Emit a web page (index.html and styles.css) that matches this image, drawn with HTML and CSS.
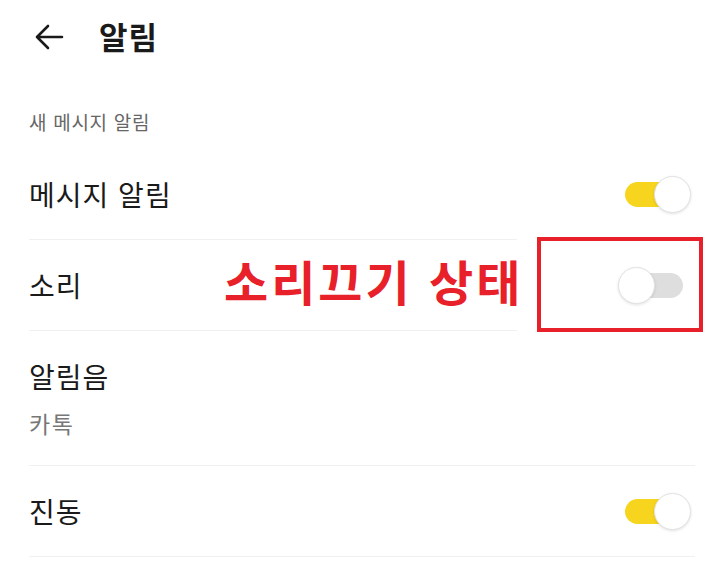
FILE: index.html
```html
<!DOCTYPE html>
<html lang="ko">
<head>
<meta charset="utf-8">
<link rel="stylesheet" href="styles.css">
</head>
<body>
<div class="page">
  <header class="topbar">
    <svg class="back" width="30" height="28" viewBox="0 0 30 28">
      <path d="M28 14 H3 M14 3 L3 14 L14 25" fill="none" stroke="#1a1a1a" stroke-width="2.6" stroke-linecap="round" stroke-linejoin="round"/>
    </svg>
    <h1 class="title">알림</h1>
  </header>

  <div class="section">새 메시지 알림</div>

  <div class="list">
    <div class="row">
      <span class="label">메시지 알림</span>
      <span class="toggle on"><span class="track"></span><span class="knob"></span></span>
    </div>
    <div class="row">
      <span class="label">소리</span>
      <span class="toggle off"><span class="track"></span><span class="knob"></span></span>
    </div>
    <div class="row tall">
      <span class="label">알림음</span>
      <span class="sub">카톡</span>
    </div>
    <div class="row">
      <span class="label">진동</span>
      <span class="toggle on"><span class="track"></span><span class="knob"></span></span>
    </div>
  </div>

  <div class="annot">
    <span class="annot-text">소리끄기 상태</span>
    <span class="annot-box"></span>
  </div>
</div>
</body>
</html>
```

FILE: styles.css
```css
* { box-sizing: border-box; }
html, body { margin: 0; padding: 0; background: #fff; }
body {
  font-family: "Noto Sans CJK KR", "Noto Sans", sans-serif;
  color: #1a1a1a;
  width: 720px;
  height: 585px;
  overflow: hidden;
}
.page { position: relative; width: 720px; height: 585px; }

.topbar {
  height: 72px;
  display: flex;
  align-items: center;
  padding-left: 34px;
}
.back { display: block; margin-top: 1px; }
.title {
  margin: 0 0 0 35px;
  font-size: 31px;
  font-weight: 700;
  letter-spacing: 1px;
  line-height: 36px;
  color: #1a1a1a;
}

.section {
  padding: 40px 0 17px 29px;
  font-size: 19px;
  letter-spacing: 0.7px;
  line-height: 20px;
  color: #666;
}

.list { margin: 0 25px 0 29px; }
.row {
  height: 91px;
  display: flex;
  align-items: center;
  justify-content: space-between;
  border-bottom: 1px solid #f0f0f0;
}
.row.tall {
  height: 135px;
  flex-direction: column;
  align-items: flex-start;
  justify-content: flex-start;
  padding-top: 27px;
}
.label { font-size: 28px; letter-spacing: 1px; line-height: 36px; color: #1a1a1a; }
.sub { font-size: 23px; letter-spacing: 1.5px; line-height: 30px; color: #777; margin-top: 14px; }

.toggle {
  position: relative;
  width: 73px;
  height: 37px;
  margin-right: 4px;
  display: block;
}
.track {
  position: absolute;
  left: 7px;
  right: 8px;
  top: 6px;
  height: 25px;
  border-radius: 13px;
}
.on .track { background: #f7d51e; }
.off .track { background: #dedede; }
.knob {
  position: absolute;
  top: 0;
  width: 37px;
  height: 37px;
  border-radius: 50%;
  background: #fff;
  border: 1px solid #e2e2e2;
  box-shadow: 0 1px 3px rgba(0,0,0,0.12);
}
.on .knob { right: 0; }
.off .knob { left: 0; }

.annot {
  position: absolute;
  left: 224px;
  top: 237px;
  display: flex;
  align-items: center;
}
.annot-text {
  font-size: 48px;
  font-weight: 700;
  letter-spacing: 3px;
  line-height: 56px;
  color: #e8202a;
  margin-top: -10px;
  width: 293px;
  white-space: nowrap;
}
.annot-box {
  position: relative;
  margin-left: 20px;
  width: 166px;
  height: 95px;
  border: 4px solid #e8202a;
}
.annot-box::before {
  content: "";
  position: absolute;
  left: -24px;
  top: -4px;
  width: 20px;
  height: 95px;
  background: #fff;
}
```
